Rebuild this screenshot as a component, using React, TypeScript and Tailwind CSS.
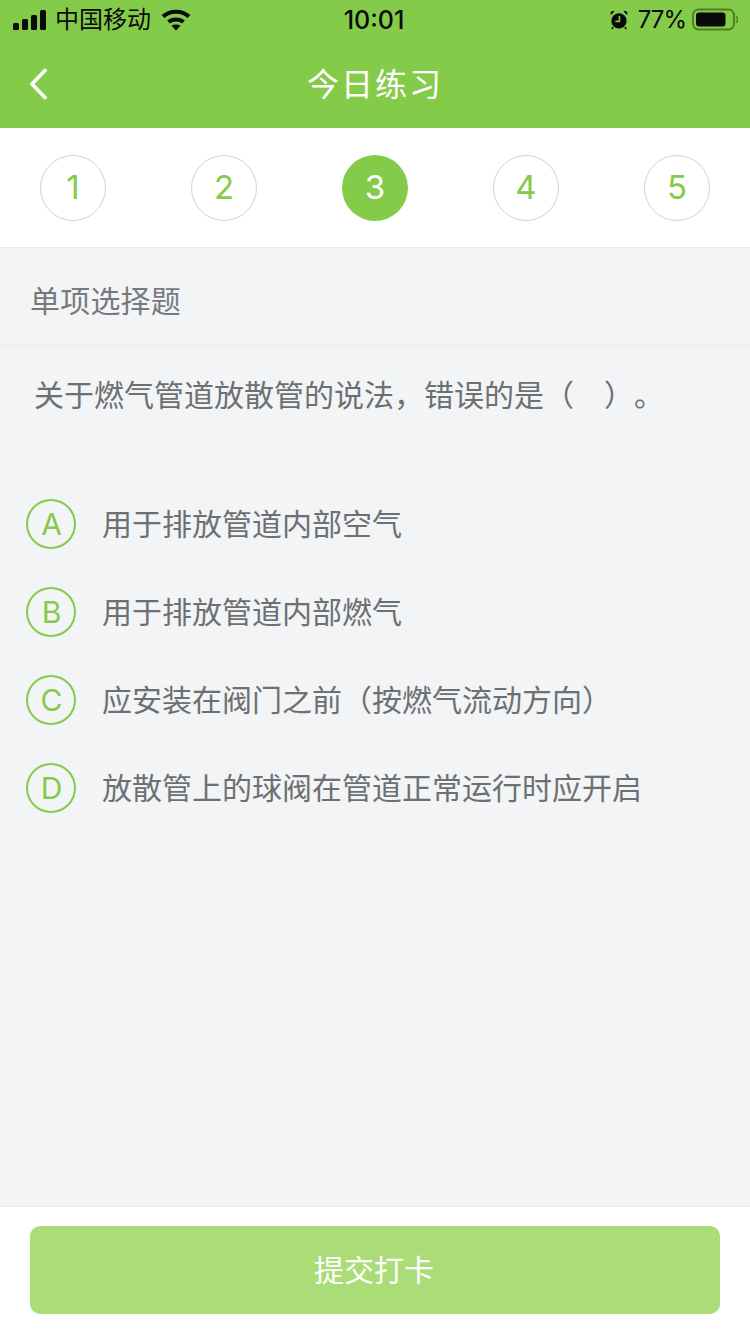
const FONT = '[font-family:Inter,"Liberation_Sans","Noto_Sans_CJK_SC",sans-serif]';

const steps = [1, 2, 3, 4, 5];
const options = [
  ["A", "用于排放管道内部空气"],
  ["B", "用于排放管道内部燃气"],
  ["C", "应安装在阀门之前（按燃气流动方向）"],
  ["D", "放散管上的球阀在管道正常运行时应开启"],
];

function Signal() {
  return (
    <svg width="34" height="20" viewBox="0 0 34 20" fill="#0a0a0a">
      <rect x="0" y="13" width="6" height="7" rx="1.5" />
      <rect x="9" y="9" width="6" height="11" rx="1.5" />
      <rect x="18" y="5" width="6" height="15" rx="1.5" />
      <rect x="27" y="0" width="6" height="20" rx="1.5" />
    </svg>
  );
}

function Wifi() {
  return (
    <svg width="30" height="22" viewBox="0 0 30 22" fill="none" stroke="#0a0a0a" strokeWidth="4">
      <path d="M2 7.5C9.5 1 20.5 1 28 7.5" />
      <path d="M7.5 13C11.5 9.5 18.5 9.5 22.5 13" />
      <path d="M15 21.5L10.5 16.8C13 15 17 15 19.5 16.8Z" fill="#0a0a0a" stroke="none" />
    </svg>
  );
}

function Alarm() {
  return (
    <svg width="18" height="20" viewBox="0 0 20 22" fill="#0a0a0a">
      <circle cx="10" cy="12" r="8.5" />
      <path d="M1 5.5L5 1.6 2.8 0.8 0.6 2.8ZM19 5.5L15 1.6 17.2 0.8 19.4 2.8Z" />
      <path d="M3.5 19l-1.5 2.2M16.5 19l1.5 2.2" stroke="#0a0a0a" strokeWidth="1.6" />
      <path d="M10.5 6.5V12.5H6" fill="none" stroke="#85cb4a" strokeWidth="1.8" />
    </svg>
  );
}

function Battery() {
  return (
    <svg width="46" height="24" viewBox="0 0 46 24" fill="none">
      <rect x="1" y="1.5" width="41" height="20" rx="5.5" stroke="#4d7f27" strokeWidth="2" />
      <rect x="4" y="4.5" width="29.5" height="14" rx="3" fill="#0a0a0a" />
      <path d="M44 8.5C45.2 9.2 45.5 10.2 45.5 11.5S45.2 13.8 44 14.5" stroke="#4d7f27" strokeWidth="1.5" />
    </svg>
  );
}

export default function App() {
  return (
    <div className={`${FONT} flex h-[1334px] w-[750px] flex-col overflow-hidden bg-[#f2f4f6]`}>
      {/* Header with the system status row */}
      <header className="h-[128px] shrink-0 bg-[#85cb4a]">
        <div className="flex h-[40px] items-center justify-between pl-[13px] pr-[12px] text-[#0a0a0a]">
          <div className="flex w-[197px] items-center gap-[8px]">
            <Signal />
            <span className="text-[24px] leading-none">中国移动</span>
            <span className="ml-[2px]"><Wifi /></span>
          </div>
          <span className="text-[25px] font-medium leading-none">10:01</span>
          <div className="flex w-[200px] items-center justify-end gap-[6px]">
            <Alarm />
            <span className="ml-[4px] text-[24px] leading-none tracking-[-1px]">77%</span>
            <Battery />
          </div>
        </div>
        <div className="relative flex h-[88px] items-center justify-center pt-[2px]">
          <svg className="absolute left-[28px] top-[28px]" width="22" height="32" viewBox="0 0 22 32" fill="none" stroke="#ffffff" strokeWidth="3.6" strokeLinecap="round" strokeLinejoin="round">
            <path d="M17 2.5L4 16L17 29.5" />
          </svg>
          <h1 className="text-[32px] font-normal leading-none tracking-[2px] text-white">今日练习</h1>
        </div>
      </header>

      {/* Question number row */}
      <nav className="flex h-[120px] shrink-0 items-center justify-between border-b border-[#e9ebed] bg-white px-[40px]">
        {steps.map((n) =>
          n === 3 ? (
            <div key={n} className="flex h-[66px] w-[66px] items-center justify-center rounded-full bg-[#85cb4a] text-[33px] text-white">{n}</div>
          ) : (
            <div key={n} className="flex h-[66px] w-[66px] items-center justify-center rounded-full border border-[#cfd3d6] text-[33px] text-[#85cb4a]">{n}</div>
          ),
        )}
      </nav>

      {/* Question body */}
      <main className="flex-1">
        <div className="flex h-[98px] items-center border-b border-[#e9ebed] pl-[30px] pt-[8px] text-[30px] leading-none tracking-[0.2px] text-[#777a7d]">单项选择题</div>
        <p className="pl-[34px] pt-[33px] text-[30px] leading-[32px] text-[#6d7073] [text-spacing-trim:space-all]">关于燃气管道放散管的说法，错误的是（　）。</p>
        <ul className="mt-[88px] flex flex-col gap-[38px] pl-[26px]">
          {options.map(([key, text]) => (
            <li key={key} className="flex h-[50px] items-center gap-[26px]">
              <span className="flex h-[50px] w-[50px] items-center justify-center rounded-full border-2 border-[#85cb4a] pl-[1px] text-[30px] leading-none text-[#85cb4a]">{key}</span>
              <span className="text-[30px] leading-none text-[#6d7073]">{text}</span>
            </li>
          ))}
        </ul>
      </main>

      {/* Submit bar */}
      <footer className="flex h-[128px] shrink-0 items-start border-t border-[#e9ebed] bg-white px-[30px] pt-[19px]">
        <button className="h-[88px] w-[690px] rounded-[10px] bg-[#aadd78] pr-[2px] text-[30px] text-white">提交打卡</button>
      </footer>
    </div>
  );
}
